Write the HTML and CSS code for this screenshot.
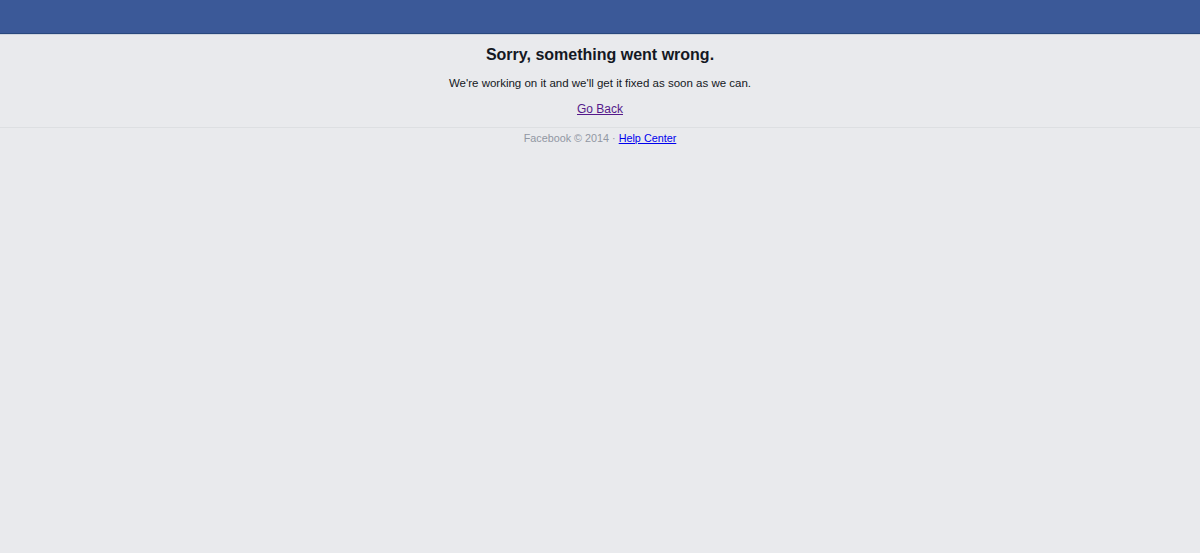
FILE: index.html
```html
<!DOCTYPE html>
<html>
<head>
<meta charset="utf-8">
<link rel="stylesheet" href="styles.css">
</head>
<body>
<div class="topbar"></div>
<div class="content">
  <h2 class="title">Sorry, something went wrong.</h2>
  <p class="msg">We're working on it and we'll get it fixed as soon as we can.</p>
  <p class="back"><a class="visited" href="#">Go Back</a></p>
</div>
<div class="footer">
  <span class="copy">Facebook © 2014 · </span><a class="help" href="#">Help Center</a>
</div>
</body>
</html>
```
FILE: styles.css
```css
html, body {
  margin: 0;
  padding: 0;
  background: #e9eaed;
  font-family: "Liberation Sans", Arial, sans-serif;
  color: #141823;
}
.topbar {
  height: 33px;
  background: #3b5998;
  border-bottom: 1px solid #29487d;
  box-shadow: 0 1px 0 #d0d5df;
}
.content {
  text-align: center;
  padding-top: 11px;
  border-bottom: 1px solid #dddfe2;
  padding-bottom: 10px;
}
.title {
  margin: 0;
  font-size: 16px;
  line-height: 20px;
  font-weight: bold;
}
.msg {
  margin: 10px 0 0;
  font-size: 11.5px;
  line-height: 16px;
}
.back {
  margin: 10px 0 0;
  font-size: 12px;
  line-height: 16px;
}
.visited {
  color: #551a8b;
}
.footer {
  text-align: center;
  font-size: 10.8px;
  line-height: 14px;
  padding-top: 3px;
}
.copy {
  color: #9197a3;
}
.help {
  color: #0000ee;
}
```
